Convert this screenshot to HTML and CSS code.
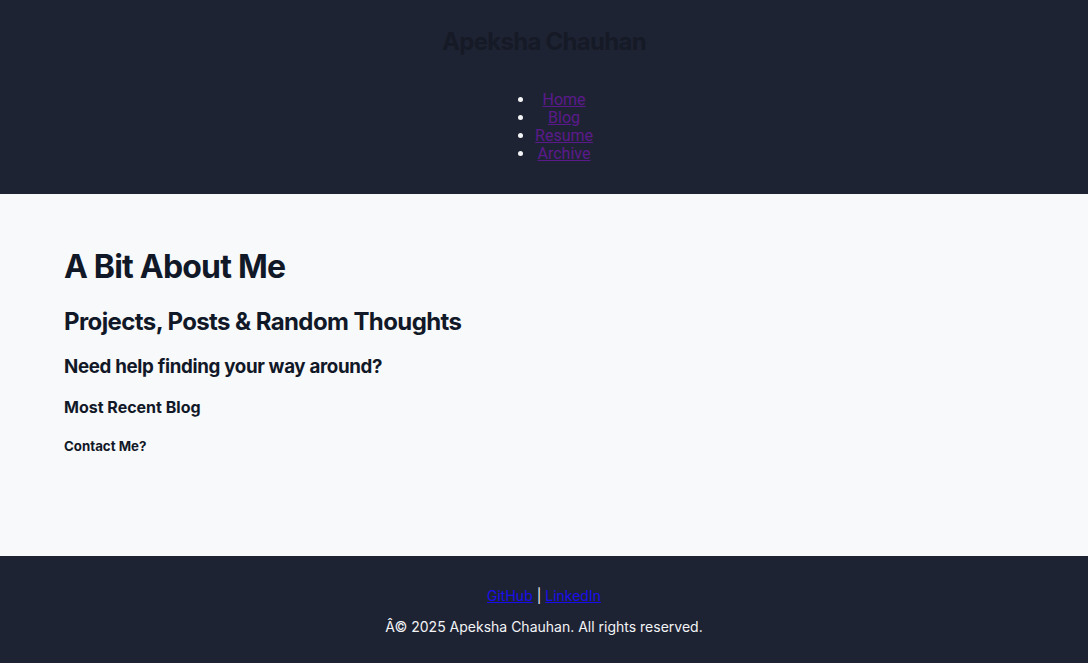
FILE: index.html
```html
<!DOCTYPE html>
<html lang="en">
<head>
<meta charset="utf-8">
<title>Apeksha Chauhan</title>
<link rel="stylesheet" href="styles.css">
</head>
<body>
<header class="site-header">
  <h1 class="site-title">Apeksha Chauhan</h1>
  <nav class="site-nav">
    <ul class="nav-list">
      <li><a href="#">Home</a></li>
      <li><a href="#">Blog</a></li>
      <li><a href="#">Resume</a></li>
      <li><a href="#">Archive</a></li>
    </ul>
  </nav>
</header>
<main class="content">
  <h1 class="h-1">A Bit About Me</h1>
  <h2 class="h-2">Projects, Posts &amp; Random Thoughts</h2>
  <h3 class="h-3">Need help finding your way around?</h3>
  <h4 class="h-4">Most Recent Blog</h4>
  <h5 class="h-5">Contact Me?</h5>
</main>
<footer class="site-footer">
  <p class="footer-links"><a href="#">GitHub</a> | <a href="#">LinkedIn</a></p>
  <p class="footer-copy">Â© 2025 Apeksha Chauhan. All rights reserved.</p>
</footer>
</body>
</html>
```
FILE: styles.css
```css
html, body {
  margin: 0;
  padding: 0;
}
body {
  font-family: Inter, "Noto Sans", sans-serif;
  background: #f8f9fb;
  color: #111827;
}
.site-header {
  background: #1e2333;
  text-align: center;
  padding: 0 0 31px;
}
.site-title {
  margin: 0;
  padding-top: 27px;
  font-size: 24px;
  line-height: 29px;
  font-weight: 700;
  letter-spacing: -0.72px;
  color: #151a26;
}
.site-nav {
  margin-top: 35px;
}
.nav-list {
  display: inline-block;
  margin: 0;
  padding-left: 40px;
  font-family: Roboto, "Liberation Sans", sans-serif;
  font-size: 16px;
  line-height: 18px;
  color: #f3f4f6;
}
.nav-list li {
  text-align: center;
}
.nav-list a {
  color: #5b1a8b;
}
.content {
  padding: 54px 64px 102px;
  display: flex;
  flex-direction: column;
  align-items: flex-start;
}
.content h1, .content h2, .content h3, .content h4, .content h5 {
  margin: 0;
  font-weight: 700;
  color: #111827;
}
.h-1 { font-size: 32px; line-height: 38px; letter-spacing: -0.8px; }
.h-2 { font-size: 24px; line-height: 30px; letter-spacing: -0.6px; margin-top: 21px !important; }
.h-3 { font-size: 18.72px; line-height: 24px; letter-spacing: -0.32px; margin-top: 18px !important; }
.h-4 { font-size: 16px; line-height: 20px; margin-top: 18px !important; }
.h-5 { font-size: 13.28px; line-height: 16px; margin-top: 21px !important; }
.site-footer {
  background: #1e2333;
  color: #f3f4f6;
  text-align: center;
  padding: 30px 0 26px;
  font-size: 14px;
  line-height: 20px;
}
.site-footer p {
  margin: 0;
}
.footer-copy {
  margin-top: 11px !important;
}
.footer-links a {
  color: #1a0dee;
}
```
